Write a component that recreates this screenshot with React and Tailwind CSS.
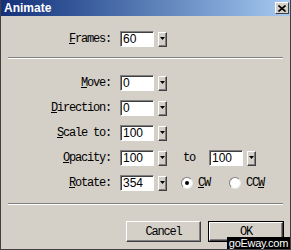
const mono = { fontFamily: '"Liberation Mono", "DejaVu Sans Mono", monospace' };
const txt = 'text-[12px] tracking-[-1.2px] text-black';

function Arrow() {
  return (
    <div className="w-[9px] h-[15px] bg-[#d4d0c8] border border-t-white border-l-white border-b-[#404040] border-r-[#404040] shadow-[inset_-1px_-1px_0_#808080] flex items-center justify-center">
      <svg width="5" height="4" viewBox="0 0 5 4">
        <path d="M0 0h5L2.5 3z" fill="#000" />
      </svg>
    </div>
  );
}

function Field({ value }) {
  return (
    <div className="flex items-center gap-[4px]">
      <div className="w-[34px] h-[16px] bg-white border border-t-[#808080] border-l-[#808080] border-b-white border-r-white shadow-[inset_1px_1px_0_#404040] pl-[2px] flex items-center text-[12px] leading-none text-black font-['Liberation_Sans',Arial,sans-serif]">
        {value}
      </div>
      <Arrow />
    </div>
  );
}

function Row({ u, rest, value, children }) {
  return (
    <div className="flex items-center h-[16px]">
      <div className={'w-[103px] text-right ' + txt} style={mono}>
        <u>{u}</u>{rest}
      </div>
      <div className="ml-[9px]">
        <Field value={value} />
      </div>
      {children}
    </div>
  );
}

function Radio({ checked }) {
  return (
    <div className="w-[12px] h-[12px] rounded-full bg-white border border-t-[#808080] border-l-[#808080] border-b-[#e8e8e8] border-r-[#e8e8e8] flex items-center justify-center">
      {checked && <div className="w-[4px] h-[4px] rounded-full bg-black" />}
    </div>
  );
}

function Separator() {
  return <div className="h-[2px] border-t border-t-[#808080] border-b border-b-white" />;
}

export default function App() {
  return (
    <div className="relative w-[291px] h-[250px] overflow-hidden bg-[#d4d0c8] border-l border-r border-b border-[#404040] flex flex-col">
      <div className="h-[16px] flex items-center justify-between pl-[3px] pr-[1px] bg-gradient-to-r from-[#14307a] to-[#a6caf0]">
        <span className="text-white font-bold text-[12px] leading-none" style={{ fontFamily: '"Liberation Sans", Arial, sans-serif' }}>
          Animate
        </span>
        <div className="w-[14px] h-[12px] bg-[#d4d0c8] border border-t-white border-l-white border-b-[#404040] border-r-[#404040] flex items-center justify-center">
          <svg width="8" height="7" viewBox="0 0 8 7">
            <path d="M0.5 0.5L7.5 6.5M7.5 0.5L0.5 6.5" stroke="#000" strokeWidth="1.6" />
          </svg>
        </div>
      </div>

      <div className="flex flex-col px-[7px] pt-[15px]">
        <Row u="F" rest="rames:" value="60" />
        <div className="mt-[10px]">
          <Separator />
        </div>

        <div className="mt-[16px] flex flex-col gap-[9px]">
          <Row u="M" rest="ove:" value="0" />
          <Row u="D" rest="irection:" value="0" />
          <Row u="S" rest="cale to:" value="100" />
          <Row u="O" rest="pacity:" value="100">
            <span className={'ml-[16px] ' + txt} style={mono}>to</span>
            <div className="ml-[14px]">
              <Field value="100" />
            </div>
          </Row>
          <Row u="R" rest="otate:" value="354">
            <div className="ml-[14px] flex items-center gap-[5px]">
              <Radio checked />
              <span className={txt} style={mono}>
                <u>C</u>W
              </span>
            </div>
            <div className="ml-[19px] flex items-center gap-[5px]">
              <Radio />
              <span className={txt} style={mono}>
                CC<u>W</u>
              </span>
            </div>
          </Row>
        </div>

        <div className="mt-[12px]">
          <Separator />
        </div>

        <div className="mt-[16px] flex justify-end gap-[7px] mr-[-1px]">
          <button className={'w-[75px] h-[21px] leading-none bg-[#d4d0c8] border border-t-white border-l-white border-b-[#404040] border-r-[#404040] shadow-[inset_-1px_-1px_0_#808080] ' + txt} style={mono}>
            Cancel
          </button>
          <button className="w-[76px] h-[21px] border border-black">
            <div className={'w-full h-full leading-none bg-[#d4d0c8] border border-t-white border-l-white border-b-[#404040] border-r-[#404040] shadow-[inset_-1px_-1px_0_#808080] flex items-center justify-center ' + txt} style={mono}>
              OK
            </div>
          </button>
        </div>
      </div>

      <div className="absolute right-0 bottom-0 h-[12px] bg-black px-[2px] flex items-center text-white text-[11px] tracking-[-0.3px] leading-none" style={{ fontFamily: '"Liberation Sans", Arial, sans-serif' }}>
        goEway.com
      </div>
    </div>
  );
}
